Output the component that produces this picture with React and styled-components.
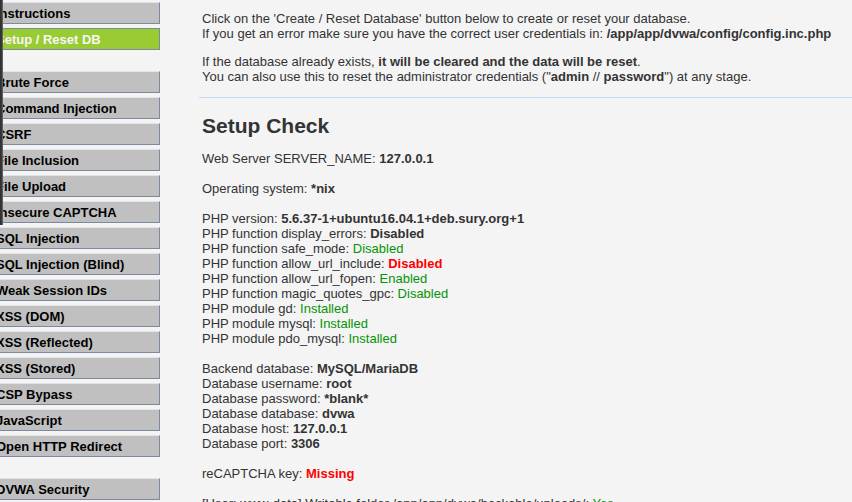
import React from "react";
import styled, { createGlobalStyle } from "styled-components";

const GlobalStyle = createGlobalStyle`
  html, body {
    margin: 0;
    padding: 0;
    background: #f4f4f4;
    overflow: hidden;
  }
  body {
    font-family: "Liberation Sans", Arial, sans-serif;
    font-size: 13px;
    color: #333;
  }
`;

const Page = styled.div`
  display: flex;
  margin-left: -11px;
  min-height: 502px;
`;

const EdgeShadow = styled.div`
  position: absolute;
  left: 0;
  top: 0;
  width: 3px;
  height: 225px;
  background: linear-gradient(to right, #2e2e2e, #3c3c3c 60%, #777);
`;

const Sidebar = styled.div`
  width: 171px;
  flex-shrink: 0;
  padding-top: 2px;
`;

const Menu = styled.ul`
  list-style: none;
  margin: 0 0 21px 0;
  padding: 0;
`;

const MenuItem = styled.li`
  margin-bottom: 4px;
`;

const MenuLink = styled.a`
  display: block;
  height: 14px;
  line-height: 14px;
  padding: 4px 3px 2px 6px;
  font-weight: bold;
  font-size: 13px;
  white-space: nowrap;
  color: ${(p) => (p.$selected ? "#f6f6f6" : "#000")};
  background: ${(p) => (p.$selected ? "#99cc33" : "#c0c0c0")};
  border: 1px solid;
  border-color: ${(p) =>
    p.$selected ? "#7c8aa0" : "#e4e4e4 #7c8aa0 #7c8aa0 #e4e4e4"};
`;

const Main = styled.div`
  flex: 1;
  padding-left: 42px;
  padding-top: 11px;
`;

const Para = styled.p`
  margin: 0 0 13px 0;
  line-height: 15px;
`;

const Rule = styled.hr`
  border: 0;
  height: 1px;
  background: #c2d8f6;
  margin: 12px 0 0 -3px;
`;

const Heading = styled.h2`
  font-size: 21px;
  line-height: 24px;
  font-weight: bold;
  color: #333;
  margin: 16px 0 13px 0;
`;

const Group = styled.div`
  line-height: 15px;
  margin-bottom: 15px;
`;

const Line = styled.div`
  white-space: nowrap;
`;

const Status = styled.span`
  color: ${(p) => (p.$fail ? "#ff0000" : "#069306")};
  font-weight: ${(p) => (p.$fail ? "bold" : "normal")};
`;

const menuGroups = [
  [
    { label: "Instructions" },
    { label: "Setup / Reset DB", selected: true },
  ],
  [
    { label: "Brute Force" },
    { label: "Command Injection" },
    { label: "CSRF" },
    { label: "File Inclusion" },
    { label: "File Upload" },
    { label: "Insecure CAPTCHA" },
    { label: "SQL Injection" },
    { label: "SQL Injection (Blind)" },
    { label: "Weak Session IDs" },
    { label: "XSS (DOM)" },
    { label: "XSS (Reflected)" },
    { label: "XSS (Stored)" },
    { label: "CSP Bypass" },
    { label: "JavaScript" },
    { label: "Open HTTP Redirect" },
  ],
  [{ label: "DVWA Security" }],
];

const App = () => {
  return (
    <>
      <GlobalStyle />
      <Page>
        <Sidebar>
          {menuGroups.map((group, gi) => (
            <Menu key={gi}>
              {group.map((item) => (
                <MenuItem key={item.label}>
                  <MenuLink $selected={item.selected}>{item.label}</MenuLink>
                </MenuItem>
              ))}
            </Menu>
          ))}
        </Sidebar>
        <Main>
          <Para>
            Click on the 'Create / Reset Database' button below to create or
            reset your database.
            <br />
            If you get an error make sure you have the correct user credentials
            in: <b>/app/app/dvwa/config/config.inc.php</b>
          </Para>
          <Para>
            If the database already exists,{" "}
            <b>it will be cleared and the data will be reset</b>.
            <br />
            You can also use this to reset the administrator credentials ("
            <b>admin</b> // <b>password</b>") at any stage.
          </Para>
          <Rule />
          <Heading>Setup Check</Heading>
          <Group>
            <Line>
              Web Server SERVER_NAME: <b>127.0.0.1</b>
            </Line>
          </Group>
          <Group>
            <Line>
              Operating system: <b>*nix</b>
            </Line>
          </Group>
          <Group>
            <Line>
              PHP version: <b>5.6.37-1+ubuntu16.04.1+deb.sury.org+1</b>
            </Line>
            <Line>
              PHP function display_errors: <b>Disabled</b>
            </Line>
            <Line>
              PHP function safe_mode: <Status>Disabled</Status>
            </Line>
            <Line>
              PHP function allow_url_include: <Status $fail>Disabled</Status>
            </Line>
            <Line>
              PHP function allow_url_fopen: <Status>Enabled</Status>
            </Line>
            <Line>
              PHP function magic_quotes_gpc: <Status>Disabled</Status>
            </Line>
            <Line>
              PHP module gd: <Status>Installed</Status>
            </Line>
            <Line>
              PHP module mysql: <Status>Installed</Status>
            </Line>
            <Line>
              PHP module pdo_mysql: <Status>Installed</Status>
            </Line>
          </Group>
          <Group>
            <Line>
              Backend database: <b>MySQL/MariaDB</b>
            </Line>
            <Line>
              Database username: <b>root</b>
            </Line>
            <Line>
              Database password: <b>*blank*</b>
            </Line>
            <Line>
              Database database: <b>dvwa</b>
            </Line>
            <Line>
              Database host: <b>127.0.0.1</b>
            </Line>
            <Line>
              Database port: <b>3306</b>
            </Line>
          </Group>
          <Group>
            <Line>
              reCAPTCHA key: <Status $fail>Missing</Status>
            </Line>
          </Group>
          <Group>
            <Line>
              [User: www-data] Writable folder /app/app/dvwa/hackable/uploads/:{" "}
              <Status>Yes</Status>
            </Line>
          </Group>
        </Main>
      </Page>
      <EdgeShadow />
    </>
  );
};

export default App;
